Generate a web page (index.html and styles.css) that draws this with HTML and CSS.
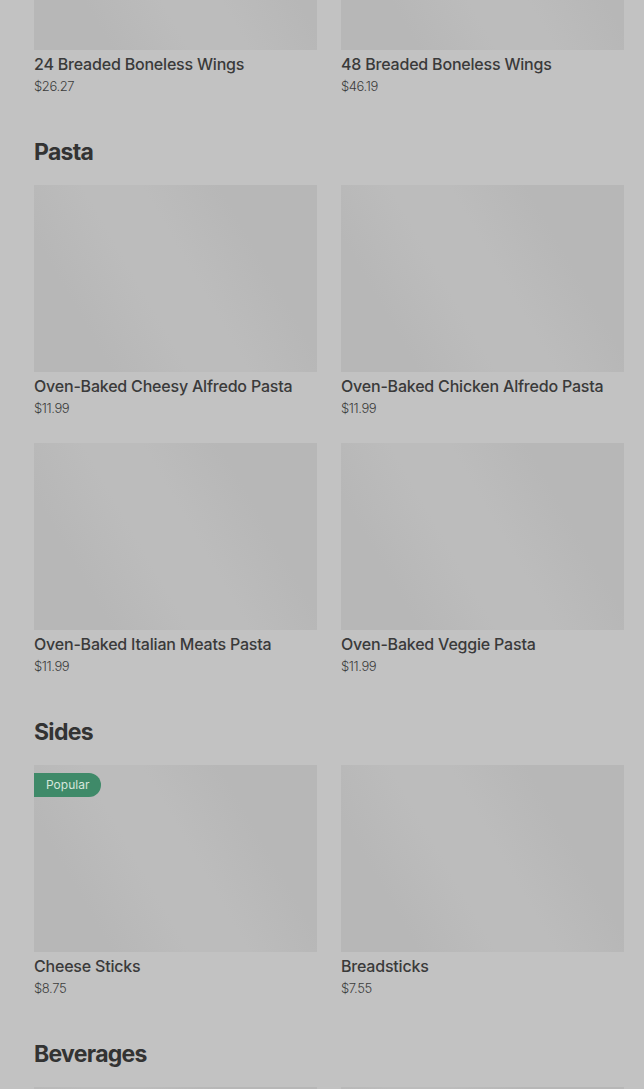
FILE: index.html
```html
<!DOCTYPE html>
<html lang="en">
<head>
    <meta charset="UTF-8">
    <meta name="viewport" content="width=device-width, initial-scale=1.0">
    <title>Menu</title>
    <link rel="stylesheet" href="styles.css">
</head>
<body>

    <main class="menu">
        <section class="menu-section">
            <div class="item-grid">
                <div class="item">
                    <div class="thumb"></div>
                    <div class="item-name">24 Breaded Boneless Wings</div>
                    <div class="item-price">$26.27</div>
                </div>
                <div class="item">
                    <div class="thumb"></div>
                    <div class="item-name">48 Breaded Boneless Wings</div>
                    <div class="item-price">$46.19</div>
                </div>
            </div>
        </section>

        <section class="menu-section">
            <h2 class="section-title">Pasta</h2>
            <div class="item-grid">
                <div class="item">
                    <div class="thumb"></div>
                    <div class="item-name">Oven-Baked Cheesy Alfredo Pasta</div>
                    <div class="item-price">$11.99</div>
                </div>
                <div class="item">
                    <div class="thumb"></div>
                    <div class="item-name">Oven-Baked Chicken Alfredo Pasta</div>
                    <div class="item-price">$11.99</div>
                </div>
                <div class="item">
                    <div class="thumb"></div>
                    <div class="item-name">Oven-Baked Italian Meats Pasta</div>
                    <div class="item-price">$11.99</div>
                </div>
                <div class="item">
                    <div class="thumb"></div>
                    <div class="item-name">Oven-Baked Veggie Pasta</div>
                    <div class="item-price">$11.99</div>
                </div>
            </div>
        </section>

        <section class="menu-section">
            <h2 class="section-title">Sides</h2>
            <div class="item-grid">
                <div class="item">
                    <div class="thumb">
                        <span class="badge">Popular</span>
                    </div>
                    <div class="item-name">Cheese Sticks</div>
                    <div class="item-price">$8.75</div>
                </div>
                <div class="item">
                    <div class="thumb"></div>
                    <div class="item-name">Breadsticks</div>
                    <div class="item-price">$7.55</div>
                </div>
            </div>
        </section>

        <section class="menu-section">
            <h2 class="section-title">Beverages</h2>
            <div class="item-grid">
                <div class="item">
                    <div class="thumb"></div>
                </div>
                <div class="item">
                    <div class="thumb"></div>
                </div>
            </div>
        </section>
    </main>

</body>
</html>
```

FILE: styles.css
```css
/* page */
body {
    margin: 0;
    background-color: #c2c2c2;
    font-family: Inter, "Liberation Sans", sans-serif;
    color: #383838;
    overflow: hidden;
}

.menu {
    padding: 0 20px 0 34px;
    margin-top: -137px; /* scrolled down into the wings section */
}

.menu-section + .menu-section {
    margin-top: 40px;
}

.section-title {
    margin: 0 0 17px;
    font-size: 23px;
    line-height: 32px;
    font-weight: 700;
    letter-spacing: -0.7px;
    color: #333;
}

/* items */
.item-grid {
    display: grid;
    grid-template-columns: 283px 283px;
    column-gap: 24px;
    row-gap: 25px;
}

.thumb {
    position: relative;
    height: 187px;
    background-color: #b8b8b8;
    background-image: linear-gradient(60deg, #b7b7b7 20%, #bcbcbc 40%, #bcbcbc 55%, #b7b7b7 75%);
}

.item-name {
    margin-top: 4px;
    font-size: 16px;
    line-height: 20px;
    font-weight: 500;
    letter-spacing: -0.2px;
    color: #3a3a3a;
    white-space: nowrap;
}

.item-price {
    margin-top: 2px;
    font-size: 13px;
    line-height: 20px;
    font-weight: 300;
    letter-spacing: -0.4px;
    color: #3c3c3c;
}

.badge {
    position: absolute;
    top: 8px;
    left: 0;
    height: 24px;
    padding: 0 12px;
    border-radius: 0 12px 12px 0;
    background-color: #3f8a69;
    color: #d6e6dc;
    font-size: 12px;
    line-height: 24px;
}
```
